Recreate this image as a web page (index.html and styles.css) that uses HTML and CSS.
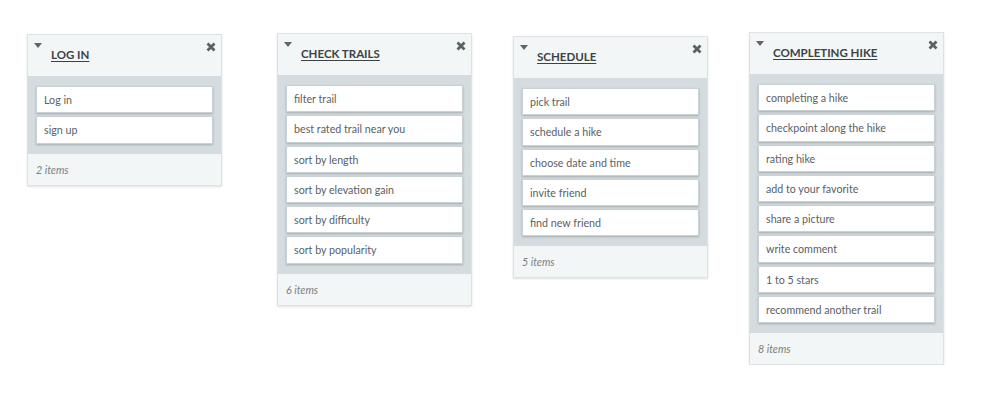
FILE: index.html
```html
<!DOCTYPE html>
<html lang="en">
<head>
<meta charset="utf-8">
<title>Lists</title>
<link rel="stylesheet" href="styles.css">
</head>
<body>
<div class="board">
  <section class="list list-1">
    <header class="list-head">
      <span class="caret"></span>
      <a class="list-title" href="#">LOG IN</a>
      <svg class="close" viewBox="0 0 10 10" width="10" height="10"><path d="M1.5 1.5 L8.5 8.5 M8.5 1.5 L1.5 8.5" stroke="#596167" stroke-width="2.8" stroke-linecap="butt"/></svg>
    </header>
    <ul class="list-body">
      <li class="card">Log in</li>
      <li class="card">sign up</li>
    </ul>
    <footer class="list-foot">2 items</footer>
  </section>

  <section class="list list-2">
    <header class="list-head">
      <span class="caret"></span>
      <a class="list-title" href="#">CHECK TRAILS</a>
      <svg class="close" viewBox="0 0 10 10" width="10" height="10"><path d="M1.5 1.5 L8.5 8.5 M8.5 1.5 L1.5 8.5" stroke="#596167" stroke-width="2.8" stroke-linecap="butt"/></svg>
    </header>
    <ul class="list-body">
      <li class="card">filter trail</li>
      <li class="card">best rated trail near you</li>
      <li class="card">sort by length</li>
      <li class="card">sort by elevation gain</li>
      <li class="card">sort by difficulty</li>
      <li class="card">sort by popularity</li>
    </ul>
    <footer class="list-foot">6 items</footer>
  </section>

  <section class="list list-3">
    <header class="list-head">
      <span class="caret"></span>
      <a class="list-title" href="#">SCHEDULE</a>
      <svg class="close" viewBox="0 0 10 10" width="10" height="10"><path d="M1.5 1.5 L8.5 8.5 M8.5 1.5 L1.5 8.5" stroke="#596167" stroke-width="2.8" stroke-linecap="butt"/></svg>
    </header>
    <ul class="list-body">
      <li class="card">pick trail</li>
      <li class="card">schedule a hike</li>
      <li class="card">choose date and time</li>
      <li class="card">invite friend</li>
      <li class="card">find new friend</li>
    </ul>
    <footer class="list-foot">5 items</footer>
  </section>

  <section class="list list-4">
    <header class="list-head">
      <span class="caret"></span>
      <a class="list-title" href="#">COMPLETING HIKE</a>
      <svg class="close" viewBox="0 0 10 10" width="10" height="10"><path d="M1.5 1.5 L8.5 8.5 M8.5 1.5 L1.5 8.5" stroke="#596167" stroke-width="2.8" stroke-linecap="butt"/></svg>
    </header>
    <ul class="list-body">
      <li class="card">completing a hike</li>
      <li class="card">checkpoint along the hike</li>
      <li class="card">rating hike</li>
      <li class="card">add to your favorite</li>
      <li class="card">share a picture</li>
      <li class="card">write comment</li>
      <li class="card">1 to 5 stars</li>
      <li class="card">recommend another trail</li>
    </ul>
    <footer class="list-foot">8 items</footer>
  </section>
</div>
</body>
</html>
```

FILE: styles.css
```css
html, body {
  margin: 0;
  padding: 0;
  background: #ffffff;
}

body {
  font-family: "Lato", "Open Sans", "Liberation Sans", sans-serif;
  color: #555a5e;
}

.board {
  display: flex;
  align-items: flex-start;
  gap: 41px;
  padding-left: 27px;
}

.list {
  width: 195px;
  box-sizing: border-box;
  border: 1px solid #dde3e5;
  box-shadow: 0 1px 2px rgba(0, 0, 0, 0.12);
  background: #f3f6f6;
}

.list-1 { margin-top: 34px; }
.list-2 { margin-top: 33px; margin-left: 14px; }
.list-3 { margin-top: 36px; }
.list-4 { margin-top: 32px; }

.list-head {
  position: relative;
  height: 41px;
  box-sizing: border-box;
  padding: 8px 0 0 23px;
  background: #f3f6f6;
}

.caret {
  position: absolute;
  left: 6px;
  top: 8px;
  width: 0;
  height: 0;
  border-left: 4.5px solid transparent;
  border-right: 4.5px solid transparent;
  border-top: 5px solid #5e666b;
}

.list-title {
  font-size: 11.5px;
  font-weight: 700;
  color: #3c4246;
  text-decoration: underline;
  text-underline-offset: 2px;
  line-height: 14px;
}

.close {
  position: absolute;
  right: 5px;
  top: 7px;
}

.list-body {
  list-style: none;
  margin: 0;
  padding: 10px 8px 10px 8px;
  background: #d4dcdf;
  display: flex;
  flex-direction: column;
  gap: 3px;
}

.card {
  height: 27.25px;
  box-sizing: border-box;
  background: #ffffff;
  border: 1px solid #c9d1d4;
  box-shadow: 0 1px 2px rgba(0, 0, 0, 0.22);
  padding: 0 7px;
  display: flex;
  align-items: center;
  font-size: 10.7px;
  color: #5b6064;
}

.list-foot {
  height: 31px;
  box-sizing: border-box;
  padding: 9px 8px 0 8px;
  font-size: 10.7px;
  font-style: italic;
  color: #7a8085;
  background: #f3f6f6;
}
```
